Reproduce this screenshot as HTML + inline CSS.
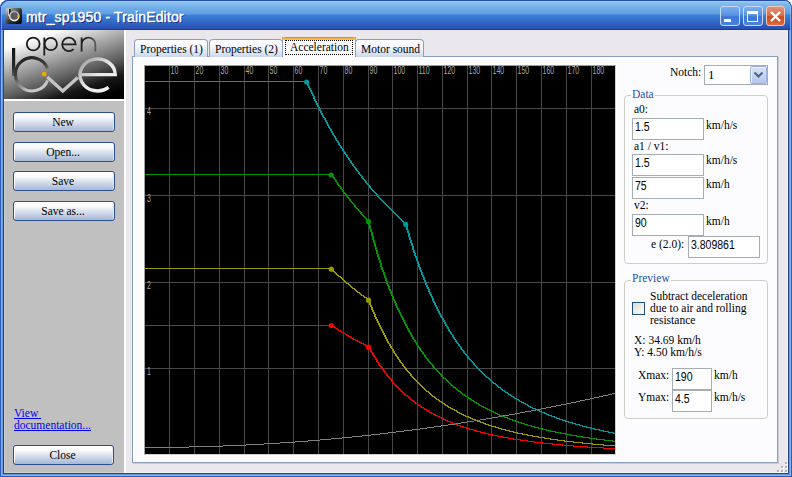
<!DOCTYPE html>
<html><head><meta charset="utf-8">
<style>
*{box-sizing:border-box}
html,body{margin:0;padding:0;width:792px;height:477px;overflow:hidden;background:#fff}
body{position:relative;font-family:"Liberation Serif",serif;font-size:11.5px;color:#000}
.a{position:absolute}
#frame{left:0;top:0;width:792px;height:477px;background:#fff}
#title{left:0;top:0;width:792px;height:30px;border-radius:8px 8px 0 0;box-shadow:inset 1px 1px 0 #2248b0,inset -1px 0 0 #2c5cc0;
 background:linear-gradient(to bottom,#2040a0 0,#2040a0 1px,#a8d0f4 1px,#a8d0f4 2px,#88c0ee 2px,#80baec 4px,#5c9ce2 14px,#3c80d6 15px,#3a7cd4 17px,#2a50b4 28px,#2a50b4 29px,#1e3898 29px,#1e3898 30px)}
#bottom{left:0;top:473px;width:792px;height:4px;background:linear-gradient(to bottom,#23449a 0,#23449a 1px,#5a8ad8 1px,#5a8ad8 2px,#84b2e2 2px,#84b2e2 3px,#2c5cc0 3px)}
#client{left:4px;top:30px;width:784px;height:443px;background:#eae8ec;border-right:1px solid #f4f2f0;border-bottom:1px solid #f4f2f0}
.ttl{left:26px;top:9px;letter-spacing:0.15px;-webkit-text-stroke:0.45px #fff;font:14px "Liberation Sans",sans-serif;color:#fff;text-shadow:1px 1px 0 #0a1a80;white-space:pre;line-height:16px}
.tb{top:6px;width:20px;height:20px;border:1px solid #c4d8f6;border-radius:3px;
 background:linear-gradient(to bottom,#7aaef0 0,#5a92e2 45%,#3e76d6 55%,#4a82dc 100%)}
.tbc{border-color:#f0c8b8;background:linear-gradient(to bottom,#e09078 0,#d87050 45%,#cc4a1c 55%,#e06a3c 100%)}
/* left panel */
#logo{left:4px;top:30px;width:120px;height:69px;overflow:hidden;
 background:#888}
#lpanel{left:4px;top:101px;width:120px;height:372px;background:#c0c0c0;border-left:1px solid #cecbc6;border-bottom:1px solid #d2d0ca}
#wline{left:124px;top:30px;width:2px;height:443px;background:#fff}
#wline2{left:4px;top:99px;width:120px;height:2px;background:#fff}
.btn{width:102px;height:20px;border:1px solid #2c4e8a;border-radius:3px;text-align:center;line-height:18px;padding-right:2px;
 background:linear-gradient(to bottom,#ffffff 0,#f8f9fb 25%,#d6deec 55%,#b4c3de 85%,#a8b8d6 100%);
 box-shadow:inset 1px 1px 0 #fff, inset -1px 0 0 #e4eaf4;font-size:11.5px;white-space:pre}
.lnk{color:#0000ff;text-decoration:underline;line-height:12px;white-space:pre}
/* tabs */
#page{left:132px;top:56px;width:646px;height:407px;border:1px solid #8aa0bc;background:#fcfcfe;box-shadow:1px 1px 0 #c4cad6}
.tab{top:39px;height:18px;border:1px solid #8aa0bc;border-bottom:none;border-radius:4px 4px 0 0;
 background:linear-gradient(to bottom,#fefefe 0,#f6f8fc 35%,#dde6f4 75%,#c8d6ee 100%);white-space:pre;line-height:16px;padding-left:5px;padding-top:1px}
.tabs{top:37px;height:20px;border:1px solid #8aa0bc;border-top:none;border-bottom:none;background:#fcfcfe;white-space:pre}
.txt{white-space:pre;line-height:12px}
.inp{background:#fff;border:1px solid #a5acb2;font:12.5px "Liberation Sans",sans-serif;line-height:16px;padding-left:2px;white-space:pre}
.inp span{display:inline-block;transform:scaleX(.84);transform-origin:0 0}
.grp{border:1px solid #cdcdc8;border-radius:4px}
.glab{color:#2850b0;background:#fcfcfe;padding:0 1px;white-space:pre;line-height:12px}
</style></head><body>
<div id="frame" class="a"></div>
<div class="a" style="left:0;top:8px;width:792px;height:469px;border:1px solid #2c5cc0;border-top:none"></div>
<div class="a" style="left:1px;top:8px;width:790px;height:468px;border:1px solid #86b4e4;border-top:none"></div>
<div class="a" style="left:2px;top:8px;width:788px;height:467px;border:1px solid #6496da;border-top:none"></div>
<div class="a" style="left:3px;top:30px;width:786px;height:444px;border:1px solid #23449a;border-top:none"></div>
<div id="title" class="a"></div>
<div id="client" class="a"></div>
<!-- icon -->
<div class="a" style="left:6px;top:8px;width:16px;height:16px;border-radius:2px;overflow:hidden;background:linear-gradient(135deg,#e0e0e0 0,#808080 25%,#303030 55%,#000 100%)">
 <svg width="16" height="16" style="position:absolute;left:0;top:0">
  <defs><linearGradient id="ib" x1="0" y1="0" x2="0" y2="1"><stop offset="0" stop-color="#a8a8a8"/><stop offset="1" stop-color="#f4f4f4"/></linearGradient></defs>
  <path d="M2.6 1V8" stroke="#d0d0d0" stroke-width="1" fill="none"/><path d="M3.8 1V8" stroke="#000" stroke-width="1.4" fill="none"/>
  <circle cx="8.3" cy="8" r="4.6" fill="#5a5a5a" stroke="url(#ib)" stroke-width="1.6"/>
  <circle cx="12.2" cy="8" r="1.1" fill="#ffb000"/>
 </svg>
</div>
<div class="a" style="left:1px;top:6px;width:1px;height:24px;background:rgba(160,210,250,.55)"></div>
<div class="a" style="left:790px;top:6px;width:1px;height:24px;background:rgba(160,210,250,.55)"></div>
<div class="a ttl">mtr_sp1950 - TrainEditor</div>
<div class="a tb" style="left:720px"><div class="a" style="left:3px;top:12px;width:7px;height:3px;background:#fff"></div></div>
<div class="a tb" style="left:743px"><div class="a" style="left:3px;top:4px;width:11px;height:11px;border:1px solid #fff;border-top-width:3px"></div></div>
<div class="a tb tbc" style="left:766px;width:19px"><svg width="19" height="20" style="position:absolute;left:-1px;top:-1px"><path d="M5 6L14 15M14 6L5 15" stroke="#fff" stroke-width="2.4" fill="none"/></svg></div>

<!-- left panel -->
<div id="logo" class="a">
 <svg width="120" height="69" style="position:absolute;left:0;top:0">
  <defs>
   <linearGradient id="lg" gradientUnits="userSpaceOnUse" x1="0" y1="0" x2="35.8" y2="106.4"><stop offset=".15" stop-color="#fff"/><stop offset=".34" stop-color="#b4b4b4"/><stop offset=".585" stop-color="#585858"/><stop offset=".72" stop-color="#161616"/><stop offset=".85" stop-color="#000"/></linearGradient>
   <linearGradient id="gb" x1="0" y1="0" x2="0.4" y2="1"><stop offset="0" stop-color="#1e1e1e"/><stop offset=".45" stop-color="#3a3a3a"/><stop offset="1" stop-color="#c8c8c8"/></linearGradient>
   <linearGradient id="ge" x1="0" y1="0" x2="1" y2="1"><stop offset="0" stop-color="#9a9a9a"/><stop offset=".5" stop-color="#e8e8e8"/><stop offset="1" stop-color="#f4f4f4"/></linearGradient>
   <linearGradient id="gn" gradientUnits="userSpaceOnUse" x1="20" y1="0" x2="95" y2="0"><stop offset="0" stop-color="#1a1a1a"/><stop offset=".8" stop-color="#222"/><stop offset="1" stop-color="#666"/></linearGradient>
  </defs>
  <rect width="120" height="69" fill="url(#lg)"/>
  <g fill="none" stroke="url(#gn)" stroke-width="1.8">
   <circle cx="29.2" cy="14" r="6.4"/>
   <path d="M40.3 7.5V25.5"/><circle cx="46.8" cy="14" r="6.2"/>
   <path d="M58.3 14.3H71.6A6.7 6.7 0 1 0 69.6 19.2"/>
   <path d="M77.6 21.5V7.5M77.6 14.2A6.9 6.6 0 0 1 91.4 14.2V21.5"/>
  </g>
  <linearGradient id="gs" gradientUnits="userSpaceOnUse" x1="0" y1="18" x2="0" y2="50"><stop offset="0" stop-color="#111"/><stop offset=".6" stop-color="#2a2a2a"/><stop offset="1" stop-color="#777"/></linearGradient><path d="M9.6 18V46" stroke="url(#gs)" stroke-width="3.2" fill="none"/>
  <path d="M43.6 38.5A16.6 16.6 0 1 0 43.6 50.2" stroke="url(#gb)" stroke-width="3.1" fill="none"/>
  <path d="M43.2 47L58.8 61L73.8 47.5" stroke="#c4c4c4" stroke-width="3.4" fill="none" stroke-linejoin="miter"/>
  <path d="M75.5 44.6H111.2A17.6 16 0 1 0 104.6 57.4" stroke="url(#ge)" stroke-width="3.4" fill="none"/>
  <circle cx="40.2" cy="44.2" r="2.4" fill="#f0a800"/>
 </svg>
</div>
<div id="wline2" class="a"></div>
<div id="lpanel" class="a"></div>
<div id="wline" class="a"></div>
<div class="a btn" style="left:13px;top:112px">New</div>
<div class="a btn" style="left:13px;top:142px">Open...</div>
<div class="a btn" style="left:13px;top:171px">Save</div>
<div class="a btn" style="left:13px;top:201px">Save as...</div>
<div class="a lnk" style="left:14px;top:407px">View </div>
<div class="a lnk" style="left:14px;top:419px">documentation...</div>
<div class="a btn" style="left:13px;top:445px;width:101px">Close</div>

<!-- tabs -->
<div id="page" class="a"></div>
<div class="a tab" style="left:134px;width:74px">Properties (1)</div>
<div class="a tab" style="left:209px;width:74px">Properties (2)</div>
<div class="a tab" style="left:355px;width:69px">Motor sound</div>
<div class="a tabs" style="left:282px;width:74px"><div class="a" style="left:-1px;top:0;width:74px;height:3px;border-radius:3px 3px 0 0;background:linear-gradient(to bottom,#e68b2c 0,#e68b2c 1px,#f8a83a 1px,#ffc73c 3px)"></div>
 <div class="a" style="left:2px;top:3px;width:68px;height:15px;outline:1px dotted #000;outline-offset:-1px"></div>
 <div class="a txt" style="left:7px;top:4px">Acceleration</div></div>

<!-- chart -->
<div class="a" style="left:143px;top:64px;width:474px;height:392px;border:1px solid;border-color:#fff #fff #fff #fff"></div>
<div class="a" style="left:144px;top:65px;width:472px;height:390px;border:1px solid;border-color:#a0a0a0 #d4d0c8 #d4d0c8 #a0a0a0"></div>
<svg width="470" height="388" viewBox="145 66 470 388" style="position:absolute;left:145px;top:66px;display:block" shape-rendering="crispEdges">
<rect x="145" y="66" width="470" height="388" fill="#000"/>
<path d="M169 66h1v388h-1zM194 66h1v388h-1zM219 66h1v388h-1zM244 66h1v388h-1zM268 66h1v388h-1zM293 66h1v388h-1zM318 66h1v388h-1zM343 66h1v388h-1zM368 66h1v388h-1zM392 66h1v388h-1zM417 66h1v388h-1zM442 66h1v388h-1zM467 66h1v388h-1zM491 66h1v388h-1zM516 66h1v388h-1zM541 66h1v388h-1zM566 66h1v388h-1zM591 66h1v388h-1zM145 368h470v1h-470zM145 282h470v1h-470zM145 195h470v1h-470zM145 108h470v1h-470z" fill="#484848"/>
<g transform="scale(0.7 1)" font-family="Liberation Sans" font-size="10" fill="#a8a8a8" shape-rendering="auto"><text x="243.571" y="74.5">10</text><text x="279.286" y="74.5">20</text><text x="315" y="74.5">30</text><text x="350.714" y="74.5">40</text><text x="385" y="74.5">50</text><text x="420.714" y="74.5">60</text><text x="456.429" y="74.5">70</text><text x="492.143" y="74.5">80</text><text x="527.857" y="74.5">90</text><text x="562.143" y="74.5">100</text><text x="597.857" y="74.5">110</text><text x="633.571" y="74.5">120</text><text x="669.286" y="74.5">130</text><text x="703.571" y="74.5">140</text><text x="739.286" y="74.5">150</text><text x="775" y="74.5">160</text><text x="810.714" y="74.5">170</text><text x="846.429" y="74.5">180</text><text x="210" y="375.5">1</text><text x="210" y="289.5">2</text><text x="210" y="202.5">3</text><text x="210" y="115.5">4</text></g>
<path d="M612 393h3v1h-3zM608 394h4v1h-4zM603 395h5v1h-5zM599 396h4v1h-4zM594 397h5v1h-5zM590 398h4v1h-4zM585 399h5v1h-5zM580 400h5v1h-5zM576 401h4v1h-4zM571 402h5v1h-5zM566 403h5v1h-5zM561 404h5v1h-5zM556 405h5v1h-5zM551 406h5v1h-5zM546 407h5v1h-5zM541 408h5v1h-5zM536 409h5v1h-5zM531 410h5v1h-5zM525 411h6v1h-6zM520 412h5v1h-5zM515 413h5v1h-5zM509 414h6v1h-6zM503 415h6v1h-6zM498 416h5v1h-5zM492 417h6v1h-6zM486 418h6v1h-6zM480 419h6v1h-6zM474 420h6v1h-6zM467 421h7v1h-7zM461 422h6v1h-6zM455 423h6v1h-6zM448 424h7v1h-7zM441 425h7v1h-7zM434 426h7v1h-7zM427 427h7v1h-7zM420 428h7v1h-7zM412 429h8v1h-8zM404 430h8v1h-8zM396 431h8v1h-8zM388 432h8v1h-8zM380 433h8v1h-8zM371 434h9v1h-9zM362 435h9v1h-9zM352 436h10v1h-10zM342 437h10v1h-10zM331 438h11v1h-11zM320 439h11v1h-11zM308 440h12v1h-12zM295 441h13v1h-13zM280 442h15v1h-15zM264 443h16v1h-16zM246 444h18v1h-18zM223 445h23v1h-23zM189 446h34v1h-34zM145 447h44v1h-44z" fill="#808080"/>
<path d="M145 325h188v1h-188zM332 326h3v1h-3zM334 327h2v1h-2zM335 328h3v1h-3zM337 329h2v1h-2zM338 330h3v1h-3zM340 331h2v1h-2zM341 332h3v1h-3zM343 333h3v1h-3zM345 334h2v1h-2zM346 335h3v1h-3zM348 336h3v1h-3zM350 337h2v1h-2zM351 338h3v1h-3zM353 339h3v1h-3zM355 340h3v1h-3zM357 341h3v1h-3zM359 342h3v1h-3zM361 343h3v1h-3zM363 344h3v1h-3zM365 345h3v1h-3zM367 346h2v1h-2zM368 347h2v1h-2zM369 348h2v1h-2zM369 349h2v1h-2zM370 350h2v1h-2zM370 351h2v1h-2zM371 352h2v1h-2zM372 353h2v1h-2zM372 354h2v1h-2zM373 355h2v1h-2zM373 356h2v1h-2zM374 357h2v1h-2zM375 358h2v1h-2zM375 359h2v1h-2zM376 360h2v1h-2zM376 361h2v1h-2zM377 362h2v1h-2zM378 363h2v1h-2zM378 364h2v1h-2zM379 365h2v1h-2zM380 366h2v1h-2zM381 367h2v1h-2zM381 368h2v1h-2zM382 369h2v1h-2zM383 370h2v1h-2zM383 371h2v1h-2zM384 372h2v1h-2zM385 373h2v1h-2zM386 374h2v1h-2zM386 375h2v1h-2zM387 376h2v1h-2zM388 377h2v1h-2zM389 378h2v1h-2zM390 379h2v1h-2zM391 380h2v1h-2zM391 381h2v1h-2zM392 382h2v1h-2zM393 383h2v1h-2zM394 384h2v1h-2zM395 385h2v1h-2zM396 386h2v1h-2zM397 387h2v1h-2zM398 388h2v1h-2zM399 389h2v1h-2zM400 390h2v1h-2zM401 391h2v1h-2zM402 392h2v1h-2zM403 393h2v1h-2zM404 394h2v1h-2zM405 395h3v1h-3zM407 396h2v1h-2zM408 397h2v1h-2zM409 398h2v1h-2zM410 399h2v1h-2zM411 400h3v1h-3zM413 401h2v1h-2zM414 402h2v1h-2zM415 403h3v1h-3zM417 404h2v1h-2zM418 405h3v1h-3zM420 406h2v1h-2zM421 407h3v1h-3zM423 408h2v1h-2zM424 409h3v1h-3zM426 410h3v1h-3zM428 411h2v1h-2zM429 412h3v1h-3zM431 413h3v1h-3zM433 414h3v1h-3zM435 415h3v1h-3zM437 416h3v1h-3zM439 417h3v1h-3zM441 418h3v1h-3zM443 419h3v1h-3zM445 420h3v1h-3zM447 421h4v1h-4zM450 422h3v1h-3zM452 423h4v1h-4zM455 424h3v1h-3zM457 425h4v1h-4zM460 426h4v1h-4zM463 427h4v1h-4zM466 428h4v1h-4zM469 429h5v1h-5zM473 430h4v1h-4zM476 431h5v1h-5zM480 432h5v1h-5zM484 433h5v1h-5zM488 434h5v1h-5zM492 435h6v1h-6zM497 436h6v1h-6zM502 437h7v1h-7zM508 438h6v1h-6zM513 439h8v1h-8zM520 440h8v1h-8zM527 441h8v1h-8zM534 442h9v1h-9zM542 443h11v1h-11zM552 444h11v1h-11zM562 445h12v1h-12zM573 446h15v1h-15zM587 447h17v1h-17zM603 448h12v1h-12z" fill="#ff0000"/>
<circle cx="331.3" cy="325.5" r="2.6" fill="#ff0000" shape-rendering="auto"/>
<circle cx="368.5" cy="347.2" r="2.6" fill="#ff0000" shape-rendering="auto"/>
<path d="M145 268h187v1h-187zM331 269h2v1h-2zM332 270h2v1h-2zM333 271h2v1h-2zM334 272h2v1h-2zM335 273h2v1h-2zM336 274h2v1h-2zM337 275h2v1h-2zM338 276h3v1h-3zM340 277h2v1h-2zM341 278h2v1h-2zM342 279h2v1h-2zM343 280h2v1h-2zM344 281h2v1h-2zM345 282h2v1h-2zM346 283h3v1h-3zM348 284h2v1h-2zM349 285h2v1h-2zM350 286h2v1h-2zM351 287h2v1h-2zM352 288h3v1h-3zM354 289h2v1h-2zM355 290h2v1h-2zM356 291h2v1h-2zM357 292h3v1h-3zM359 293h2v1h-2zM360 294h2v1h-2zM361 295h3v1h-3zM363 296h2v1h-2zM364 297h3v1h-3zM366 298h2v1h-2zM367 299h2v1h-2zM368 300h2v1h-2zM368 301h2v1h-2zM369 302h2v1h-2zM369 303h2v1h-2zM369 304h2v1h-2zM370 305h2v1h-2zM370 306h2v1h-2zM371 307h2v1h-2zM371 308h2v1h-2zM371 309h2v1h-2zM372 310h2v1h-2zM372 311h2v1h-2zM373 312h2v1h-2zM373 313h2v1h-2zM374 314h2v1h-2zM374 315h2v1h-2zM374 316h2v1h-2zM375 317h2v1h-2zM375 318h2v1h-2zM376 319h2v1h-2zM376 320h2v1h-2zM377 321h2v1h-2zM377 322h2v1h-2zM378 323h2v1h-2zM378 324h2v1h-2zM379 325h2v1h-2zM379 326h2v1h-2zM380 327h2v1h-2zM380 328h2v1h-2zM381 329h2v1h-2zM381 330h2v1h-2zM382 331h2v1h-2zM382 332h2v1h-2zM383 333h2v1h-2zM383 334h2v1h-2zM384 335h2v1h-2zM384 336h2v1h-2zM385 337h2v1h-2zM385 338h2v1h-2zM386 339h2v1h-2zM386 340h2v1h-2zM387 341h2v1h-2zM387 342h2v1h-2zM388 343h2v1h-2zM389 344h2v1h-2zM389 345h2v1h-2zM390 346h2v1h-2zM390 347h2v1h-2zM391 348h2v1h-2zM392 349h2v1h-2zM392 350h2v1h-2zM393 351h2v1h-2zM393 352h2v1h-2zM394 353h2v1h-2zM395 354h2v1h-2zM395 355h2v1h-2zM396 356h2v1h-2zM397 357h2v1h-2zM397 358h2v1h-2zM398 359h2v1h-2zM399 360h2v1h-2zM399 361h2v1h-2zM400 362h2v1h-2zM401 363h2v1h-2zM402 364h2v1h-2zM402 365h2v1h-2zM403 366h2v1h-2zM404 367h2v1h-2zM405 368h2v1h-2zM405 369h2v1h-2zM406 370h2v1h-2zM407 371h2v1h-2zM408 372h2v1h-2zM409 373h2v1h-2zM410 374h2v1h-2zM410 375h2v1h-2zM411 376h2v1h-2zM412 377h2v1h-2zM413 378h2v1h-2zM414 379h2v1h-2zM415 380h2v1h-2zM416 381h2v1h-2zM417 382h2v1h-2zM418 383h2v1h-2zM419 384h2v1h-2zM420 385h2v1h-2zM421 386h2v1h-2zM422 387h2v1h-2zM423 388h2v1h-2zM424 389h2v1h-2zM425 390h2v1h-2zM426 391h3v1h-3zM428 392h2v1h-2zM429 393h2v1h-2zM430 394h2v1h-2zM431 395h2v1h-2zM432 396h3v1h-3zM434 397h2v1h-2zM435 398h2v1h-2zM436 399h3v1h-3zM438 400h2v1h-2zM439 401h3v1h-3zM441 402h2v1h-2zM442 403h3v1h-3zM444 404h2v1h-2zM445 405h3v1h-3zM447 406h2v1h-2zM448 407h3v1h-3zM450 408h3v1h-3zM452 409h3v1h-3zM454 410h3v1h-3zM456 411h2v1h-2zM457 412h3v1h-3zM459 413h3v1h-3zM461 414h3v1h-3zM463 415h3v1h-3zM465 416h4v1h-4zM468 417h3v1h-3zM470 418h3v1h-3zM472 419h4v1h-4zM475 420h3v1h-3zM477 421h4v1h-4zM480 422h4v1h-4zM483 423h3v1h-3zM485 424h4v1h-4zM488 425h4v1h-4zM491 426h5v1h-5zM495 427h4v1h-4zM498 428h4v1h-4zM501 429h5v1h-5zM505 430h5v1h-5zM509 431h5v1h-5zM513 432h5v1h-5zM517 433h6v1h-6zM522 434h6v1h-6zM527 435h6v1h-6zM532 436h7v1h-7zM538 437h7v1h-7zM544 438h7v1h-7zM550 439h8v1h-8zM557 440h8v1h-8zM564 441h10v1h-10zM573 442h10v1h-10zM582 443h11v1h-11zM592 444h12v1h-12zM603 445h12v1h-12z" fill="#9a9a00"/>
<circle cx="331.3" cy="269.2" r="2.6" fill="#9a9a00" shape-rendering="auto"/>
<circle cx="368.5" cy="300.2" r="2.6" fill="#9a9a00" shape-rendering="auto"/>
<path d="M145 174h187v1h-187zM331 175h2v1h-2zM332 176h2v1h-2zM333 177h2v1h-2zM333 178h2v1h-2zM334 179h2v1h-2zM335 180h2v1h-2zM335 181h2v1h-2zM336 182h2v1h-2zM337 183h2v1h-2zM337 184h2v1h-2zM338 185h2v1h-2zM339 186h2v1h-2zM340 187h2v1h-2zM340 188h2v1h-2zM341 189h2v1h-2zM342 190h2v1h-2zM342 191h2v1h-2zM343 192h2v1h-2zM344 193h2v1h-2zM345 194h2v1h-2zM346 195h2v1h-2zM346 196h2v1h-2zM347 197h2v1h-2zM348 198h2v1h-2zM349 199h2v1h-2zM349 200h2v1h-2zM350 201h2v1h-2zM351 202h2v1h-2zM352 203h2v1h-2zM353 204h2v1h-2zM354 205h2v1h-2zM354 206h2v1h-2zM355 207h2v1h-2zM356 208h2v1h-2zM357 209h2v1h-2zM358 210h2v1h-2zM359 211h2v1h-2zM360 212h2v1h-2zM360 213h2v1h-2zM361 214h2v1h-2zM362 215h2v1h-2zM363 216h2v1h-2zM364 217h2v1h-2zM365 218h2v1h-2zM366 219h2v1h-2zM367 220h2v1h-2zM367 221h2v1h-2zM368 222h2v1h-2zM368 223h2v1h-2zM368 224h2v1h-2zM369 225h2v1h-2zM369 226h2v1h-2zM369 227h2v1h-2zM369 228h2v1h-2zM370 229h2v1h-2zM370 230h2v1h-2zM370 231h2v1h-2zM371 232h2v1h-2zM371 233h2v1h-2zM371 234h2v1h-2zM371 235h2v1h-2zM372 236h2v1h-2zM372 237h2v1h-2zM372 238h2v1h-2zM372 239h2v1h-2zM373 240h2v1h-2zM373 241h2v1h-2zM373 242h2v1h-2zM374 243h2v1h-2zM374 244h2v1h-2zM374 245h2v1h-2zM374 246h2v1h-2zM375 247h2v1h-2zM375 248h2v1h-2zM375 249h2v1h-2zM376 250h2v1h-2zM376 251h2v1h-2zM376 252h2v1h-2zM376 253h2v1h-2zM377 254h2v1h-2zM377 255h2v1h-2zM377 256h2v1h-2zM378 257h2v1h-2zM378 258h2v1h-2zM378 259h2v1h-2zM379 260h2v1h-2zM379 261h2v1h-2zM379 262h2v1h-2zM380 263h2v1h-2zM380 264h2v1h-2zM380 265h2v1h-2zM380 266h2v1h-2zM381 267h2v1h-2zM381 268h2v1h-2zM381 269h2v1h-2zM382 270h2v1h-2zM382 271h2v1h-2zM383 272h2v1h-2zM383 273h2v1h-2zM383 274h2v1h-2zM384 275h2v1h-2zM384 276h2v1h-2zM384 277h2v1h-2zM385 278h2v1h-2zM385 279h2v1h-2zM385 280h2v1h-2zM386 281h2v1h-2zM386 282h2v1h-2zM386 283h2v1h-2zM387 284h2v1h-2zM387 285h2v1h-2zM388 286h2v1h-2zM388 287h2v1h-2zM388 288h2v1h-2zM389 289h2v1h-2zM389 290h2v1h-2zM390 291h2v1h-2zM390 292h2v1h-2zM390 293h2v1h-2zM391 294h2v1h-2zM391 295h2v1h-2zM392 296h2v1h-2zM392 297h2v1h-2zM392 298h2v1h-2zM393 299h2v1h-2zM393 300h2v1h-2zM394 301h2v1h-2zM394 302h2v1h-2zM395 303h2v1h-2zM395 304h2v1h-2zM395 305h2v1h-2zM396 306h2v1h-2zM396 307h2v1h-2zM397 308h2v1h-2zM397 309h2v1h-2zM398 310h2v1h-2zM398 311h2v1h-2zM399 312h2v1h-2zM399 313h2v1h-2zM400 314h2v1h-2zM400 315h2v1h-2zM401 316h2v1h-2zM401 317h2v1h-2zM402 318h2v1h-2zM402 319h2v1h-2zM403 320h2v1h-2zM403 321h2v1h-2zM404 322h2v1h-2zM404 323h2v1h-2zM405 324h2v1h-2zM405 325h2v1h-2zM406 326h2v1h-2zM406 327h2v1h-2zM407 328h2v1h-2zM407 329h2v1h-2zM408 330h2v1h-2zM408 331h2v1h-2zM409 332h2v1h-2zM410 333h2v1h-2zM410 334h2v1h-2zM411 335h2v1h-2zM411 336h2v1h-2zM412 337h2v1h-2zM412 338h2v1h-2zM413 339h2v1h-2zM414 340h2v1h-2zM414 341h2v1h-2zM415 342h2v1h-2zM416 343h2v1h-2zM416 344h2v1h-2zM417 345h2v1h-2zM417 346h2v1h-2zM418 347h2v1h-2zM419 348h2v1h-2zM419 349h2v1h-2zM420 350h2v1h-2zM421 351h2v1h-2zM422 352h2v1h-2zM422 353h2v1h-2zM423 354h2v1h-2zM424 355h2v1h-2zM424 356h2v1h-2zM425 357h2v1h-2zM426 358h2v1h-2zM427 359h2v1h-2zM427 360h2v1h-2zM428 361h2v1h-2zM429 362h2v1h-2zM430 363h2v1h-2zM431 364h2v1h-2zM432 365h2v1h-2zM432 366h2v1h-2zM433 367h2v1h-2zM434 368h2v1h-2zM435 369h2v1h-2zM436 370h2v1h-2zM437 371h2v1h-2zM438 372h2v1h-2zM439 373h2v1h-2zM440 374h2v1h-2zM441 375h2v1h-2zM441 376h2v1h-2zM442 377h2v1h-2zM443 378h3v1h-3zM445 379h2v1h-2zM446 380h2v1h-2zM447 381h2v1h-2zM448 382h2v1h-2zM449 383h2v1h-2zM450 384h2v1h-2zM451 385h2v1h-2zM452 386h2v1h-2zM453 387h3v1h-3zM455 388h2v1h-2zM456 389h2v1h-2zM457 390h2v1h-2zM458 391h3v1h-3zM460 392h2v1h-2zM461 393h2v1h-2zM462 394h3v1h-3zM464 395h2v1h-2zM465 396h3v1h-3zM467 397h2v1h-2zM468 398h3v1h-3zM470 399h2v1h-2zM471 400h3v1h-3zM473 401h2v1h-2zM474 402h3v1h-3zM476 403h3v1h-3zM478 404h2v1h-2zM479 405h3v1h-3zM481 406h3v1h-3zM483 407h3v1h-3zM485 408h3v1h-3zM487 409h3v1h-3zM489 410h3v1h-3zM491 411h3v1h-3zM493 412h3v1h-3zM495 413h3v1h-3zM497 414h3v1h-3zM499 415h4v1h-4zM502 416h3v1h-3zM504 417h4v1h-4zM507 418h3v1h-3zM509 419h4v1h-4zM512 420h4v1h-4zM515 421h4v1h-4zM518 422h4v1h-4zM521 423h4v1h-4zM524 424h4v1h-4zM527 425h5v1h-5zM531 426h4v1h-4zM534 427h5v1h-5zM538 428h5v1h-5zM542 429h5v1h-5zM546 430h5v1h-5zM550 431h6v1h-6zM555 432h6v1h-6zM560 433h6v1h-6zM565 434h6v1h-6zM570 435h7v1h-7zM576 436h7v1h-7zM582 437h8v1h-8zM589 438h8v1h-8zM596 439h9v1h-9zM604 440h9v1h-9zM612 441h3v1h-3z" fill="#009800"/>
<circle cx="331.3" cy="175.0" r="2.6" fill="#009800" shape-rendering="auto"/>
<circle cx="368.5" cy="221.7" r="2.6" fill="#009800" shape-rendering="auto"/>
<path d="M145 81h162v1h-162zM306 82h2v1h-2zM307 83h2v1h-2zM307 84h2v1h-2zM307 85h2v1h-2zM308 86h2v1h-2zM308 87h2v1h-2zM309 88h2v1h-2zM309 89h2v1h-2zM310 90h2v1h-2zM310 91h2v1h-2zM311 92h2v1h-2zM311 93h2v1h-2zM312 94h2v1h-2zM312 95h2v1h-2zM313 96h2v1h-2zM313 97h2v1h-2zM313 98h2v1h-2zM314 99h2v1h-2zM314 100h2v1h-2zM315 101h2v1h-2zM315 102h2v1h-2zM316 103h2v1h-2zM316 104h2v1h-2zM317 105h2v1h-2zM317 106h2v1h-2zM318 107h2v1h-2zM318 108h2v1h-2zM319 109h2v1h-2zM319 110h2v1h-2zM320 111h2v1h-2zM320 112h2v1h-2zM321 113h2v1h-2zM321 114h2v1h-2zM322 115h2v1h-2zM322 116h2v1h-2zM323 117h2v1h-2zM324 118h2v1h-2zM324 119h2v1h-2zM325 120h2v1h-2zM325 121h2v1h-2zM326 122h2v1h-2zM326 123h2v1h-2zM327 124h2v1h-2zM327 125h2v1h-2zM328 126h2v1h-2zM328 127h2v1h-2zM329 128h2v1h-2zM330 129h2v1h-2zM330 130h2v1h-2zM331 131h2v1h-2zM331 132h2v1h-2zM332 133h2v1h-2zM332 134h2v1h-2zM333 135h2v1h-2zM334 136h2v1h-2zM334 137h2v1h-2zM335 138h2v1h-2zM335 139h2v1h-2zM336 140h2v1h-2zM337 141h2v1h-2zM337 142h2v1h-2zM338 143h2v1h-2zM338 144h2v1h-2zM339 145h2v1h-2zM340 146h2v1h-2zM340 147h2v1h-2zM341 148h2v1h-2zM342 149h2v1h-2zM342 150h2v1h-2zM343 151h2v1h-2zM344 152h2v1h-2zM344 153h2v1h-2zM345 154h2v1h-2zM346 155h2v1h-2zM346 156h2v1h-2zM347 157h2v1h-2zM348 158h2v1h-2zM348 159h2v1h-2zM349 160h2v1h-2zM350 161h2v1h-2zM350 162h2v1h-2zM351 163h2v1h-2zM352 164h2v1h-2zM352 165h2v1h-2zM353 166h2v1h-2zM354 167h2v1h-2zM355 168h2v1h-2zM355 169h2v1h-2zM356 170h2v1h-2zM357 171h2v1h-2zM358 172h2v1h-2zM358 173h2v1h-2zM359 174h2v1h-2zM360 175h2v1h-2zM361 176h2v1h-2zM361 177h2v1h-2zM362 178h2v1h-2zM363 179h2v1h-2zM364 180h2v1h-2zM365 181h2v1h-2zM365 182h2v1h-2zM366 183h2v1h-2zM367 184h2v1h-2zM368 185h2v1h-2zM369 186h2v1h-2zM369 187h2v1h-2zM370 188h2v1h-2zM371 189h2v1h-2zM372 190h2v1h-2zM373 191h2v1h-2zM374 192h2v1h-2zM375 193h2v1h-2zM376 194h2v1h-2zM376 195h2v1h-2zM377 196h2v1h-2zM378 197h2v1h-2zM379 198h2v1h-2zM380 199h2v1h-2zM381 200h2v1h-2zM382 201h2v1h-2zM383 202h2v1h-2zM384 203h2v1h-2zM385 204h2v1h-2zM386 205h2v1h-2zM387 206h2v1h-2zM388 207h2v1h-2zM389 208h2v1h-2zM390 209h2v1h-2zM391 210h2v1h-2zM392 211h2v1h-2zM393 212h2v1h-2zM394 213h2v1h-2zM395 214h2v1h-2zM396 215h2v1h-2zM397 216h2v1h-2zM398 217h2v1h-2zM399 218h2v1h-2zM400 219h2v1h-2zM401 220h2v1h-2zM402 221h2v1h-2zM403 222h2v1h-2zM404 223h2v1h-2zM405 224h2v1h-2zM405 225h2v1h-2zM406 226h2v1h-2zM406 227h2v1h-2zM406 228h2v1h-2zM406 229h2v1h-2zM407 230h2v1h-2zM407 231h2v1h-2zM407 232h2v1h-2zM408 233h2v1h-2zM408 234h2v1h-2zM408 235h2v1h-2zM408 236h2v1h-2zM409 237h2v1h-2zM409 238h2v1h-2zM409 239h2v1h-2zM410 240h2v1h-2zM410 241h2v1h-2zM410 242h2v1h-2zM411 243h2v1h-2zM411 244h2v1h-2zM411 245h2v1h-2zM412 246h2v1h-2zM412 247h2v1h-2zM412 248h2v1h-2zM412 249h2v1h-2zM413 250h2v1h-2zM413 251h2v1h-2zM413 252h2v1h-2zM414 253h2v1h-2zM414 254h2v1h-2zM414 255h2v1h-2zM415 256h2v1h-2zM415 257h2v1h-2zM416 258h2v1h-2zM416 259h2v1h-2zM416 260h2v1h-2zM417 261h2v1h-2zM417 262h2v1h-2zM417 263h2v1h-2zM418 264h2v1h-2zM418 265h2v1h-2zM418 266h2v1h-2zM419 267h2v1h-2zM419 268h2v1h-2zM419 269h2v1h-2zM420 270h2v1h-2zM420 271h2v1h-2zM421 272h2v1h-2zM421 273h2v1h-2zM421 274h2v1h-2zM422 275h2v1h-2zM422 276h2v1h-2zM423 277h2v1h-2zM423 278h2v1h-2zM423 279h2v1h-2zM424 280h2v1h-2zM424 281h2v1h-2zM425 282h2v1h-2zM425 283h2v1h-2zM425 284h2v1h-2zM426 285h2v1h-2zM426 286h2v1h-2zM427 287h2v1h-2zM427 288h2v1h-2zM428 289h2v1h-2zM428 290h2v1h-2zM428 291h2v1h-2zM429 292h2v1h-2zM429 293h2v1h-2zM430 294h2v1h-2zM430 295h2v1h-2zM431 296h2v1h-2zM431 297h2v1h-2zM432 298h2v1h-2zM432 299h2v1h-2zM432 300h2v1h-2zM433 301h2v1h-2zM433 302h2v1h-2zM434 303h2v1h-2zM434 304h2v1h-2zM435 305h2v1h-2zM435 306h2v1h-2zM436 307h2v1h-2zM436 308h2v1h-2zM437 309h2v1h-2zM437 310h2v1h-2zM438 311h2v1h-2zM438 312h2v1h-2zM439 313h2v1h-2zM439 314h2v1h-2zM440 315h2v1h-2zM440 316h2v1h-2zM441 317h2v1h-2zM442 318h2v1h-2zM442 319h2v1h-2zM443 320h2v1h-2zM443 321h2v1h-2zM444 322h2v1h-2zM444 323h2v1h-2zM445 324h2v1h-2zM445 325h2v1h-2zM446 326h2v1h-2zM447 327h2v1h-2zM447 328h2v1h-2zM448 329h2v1h-2zM448 330h2v1h-2zM449 331h2v1h-2zM450 332h2v1h-2zM450 333h2v1h-2zM451 334h2v1h-2zM452 335h2v1h-2zM452 336h2v1h-2zM453 337h2v1h-2zM453 338h2v1h-2zM454 339h2v1h-2zM455 340h2v1h-2zM455 341h2v1h-2zM456 342h2v1h-2zM457 343h2v1h-2zM458 344h2v1h-2zM458 345h2v1h-2zM459 346h2v1h-2zM460 347h2v1h-2zM460 348h2v1h-2zM461 349h2v1h-2zM462 350h2v1h-2zM463 351h2v1h-2zM463 352h2v1h-2zM464 353h2v1h-2zM465 354h2v1h-2zM466 355h2v1h-2zM467 356h2v1h-2zM467 357h2v1h-2zM468 358h2v1h-2zM469 359h2v1h-2zM470 360h2v1h-2zM471 361h2v1h-2zM472 362h2v1h-2zM473 363h2v1h-2zM473 364h2v1h-2zM474 365h2v1h-2zM475 366h2v1h-2zM476 367h2v1h-2zM477 368h2v1h-2zM478 369h2v1h-2zM479 370h2v1h-2zM480 371h2v1h-2zM481 372h2v1h-2zM482 373h2v1h-2zM483 374h2v1h-2zM484 375h2v1h-2zM485 376h2v1h-2zM486 377h3v1h-3zM488 378h2v1h-2zM489 379h2v1h-2zM490 380h2v1h-2zM491 381h2v1h-2zM492 382h2v1h-2zM493 383h3v1h-3zM495 384h2v1h-2zM496 385h2v1h-2zM497 386h2v1h-2zM498 387h3v1h-3zM500 388h2v1h-2zM501 389h2v1h-2zM502 390h3v1h-3zM504 391h2v1h-2zM505 392h3v1h-3zM507 393h2v1h-2zM508 394h3v1h-3zM510 395h2v1h-2zM511 396h3v1h-3zM513 397h2v1h-2zM514 398h3v1h-3zM516 399h3v1h-3zM518 400h2v1h-2zM519 401h3v1h-3zM521 402h3v1h-3zM523 403h3v1h-3zM525 404h3v1h-3zM527 405h2v1h-2zM528 406h3v1h-3zM530 407h3v1h-3zM532 408h4v1h-4zM535 409h3v1h-3zM537 410h3v1h-3zM539 411h3v1h-3zM541 412h4v1h-4zM544 413h3v1h-3zM546 414h3v1h-3zM548 415h4v1h-4zM551 416h4v1h-4zM554 417h3v1h-3zM556 418h4v1h-4zM559 419h4v1h-4zM562 420h4v1h-4zM565 421h4v1h-4zM568 422h5v1h-5zM572 423h4v1h-4zM575 424h5v1h-5zM579 425h4v1h-4zM582 426h5v1h-5zM586 427h5v1h-5zM590 428h5v1h-5zM594 429h6v1h-6zM599 430h5v1h-5zM603 431h6v1h-6zM608 432h6v1h-6zM613 433h2v1h-2z" fill="#009a9e"/>
<circle cx="306.6" cy="82.0" r="2.6" fill="#009a9e" shape-rendering="auto"/>
<circle cx="405.7" cy="224.3" r="2.6" fill="#009a9e" shape-rendering="auto"/>
</svg>

<!-- right panel -->
<div class="a txt" style="left:670px;top:66px">Notch:</div>
<div class="a" style="left:704px;top:65px;width:64px;height:20px;background:#fff;border:1px solid #a4acb4"></div>
<div class="a" style="left:708px;top:67px;font:13px 'Liberation Serif',serif;line-height:16px">1</div>
<div class="a" style="left:750px;top:66px;width:17px;height:18px;border:1px solid #9cb2de;border-radius:2px;box-shadow:inset 1px 1px 0 #eef3fc;background:linear-gradient(to bottom,#dae4fa,#b4c6ea)">
 <svg width="17" height="18" style="position:absolute;left:-1px;top:-1px"><path d="M4.5 6.5L8.5 10.5L12.5 6.5" stroke="#4d6185" stroke-width="2" fill="none"/></svg></div>

<div class="a grp" style="left:624px;top:95px;width:144px;height:169px"></div>
<div class="a glab" style="left:631px;top:88px">Data</div>
<div class="a txt" style="left:634px;top:103px">a0:</div>
<div class="a inp" style="left:632px;top:118px;width:72px;height:22px"><span>1.5</span></div>
<div class="a txt" style="left:706px;top:119px">km/h/s</div>
<div class="a txt" style="left:634px;top:140px">a1 / v1:</div>
<div class="a inp" style="left:632px;top:154px;width:72px;height:22px"><span>1.5</span></div>
<div class="a txt" style="left:706px;top:154px">km/h/s</div>
<div class="a inp" style="left:632px;top:177px;width:72px;height:22px"><span>75</span></div>
<div class="a txt" style="left:706px;top:178px">km/h</div>
<div class="a txt" style="left:634px;top:199px">v2:</div>
<div class="a inp" style="left:632px;top:214px;width:72px;height:22px"><span>90</span></div>
<div class="a txt" style="left:706px;top:215px">km/h</div>
<div class="a txt" style="left:651px;top:238px">e (2.0):</div>
<div class="a inp" style="left:688px;top:236px;width:72px;height:22px"><span>3.809861</span></div>

<div class="a grp" style="left:624px;top:280px;width:144px;height:139px"></div>
<div class="a glab" style="left:631px;top:272px">Preview</div>
<div class="a" style="left:632px;top:302px;width:13px;height:13px;border:1px solid #1c5180;background:linear-gradient(135deg,#dcdcd7,#fff)"></div>
<div class="a txt" style="left:650px;top:290px">Subtract deceleration<br>due to air and rolling<br>resistance</div>
<div class="a txt" style="left:634px;top:334px">X: 34.69 km/h<br>Y: 4.50 km/h/s</div>
<div class="a txt" style="left:638px;top:369px">Xmax:</div>
<div class="a inp" style="left:672px;top:368px;width:40px;height:22px"><span>190</span></div>
<div class="a txt" style="left:714px;top:369px">km/h</div>
<div class="a txt" style="left:638px;top:391px">Ymax:</div>
<div class="a inp" style="left:672px;top:390px;width:40px;height:22px"><span>4.5</span></div>
<div class="a txt" style="left:714px;top:391px">km/h/s</div>
<div class="a" style="left:785px;top:462px;width:2px;height:2px;background:#b4b2b8;box-shadow:1px 1px 0 #fff"></div><div class="a" style="left:781px;top:466px;width:2px;height:2px;background:#b4b2b8;box-shadow:1px 1px 0 #fff"></div><div class="a" style="left:785px;top:466px;width:2px;height:2px;background:#b4b2b8;box-shadow:1px 1px 0 #fff"></div><div class="a" style="left:777px;top:470px;width:2px;height:2px;background:#b4b2b8;box-shadow:1px 1px 0 #fff"></div><div class="a" style="left:781px;top:470px;width:2px;height:2px;background:#b4b2b8;box-shadow:1px 1px 0 #fff"></div><div class="a" style="left:785px;top:470px;width:2px;height:2px;background:#b4b2b8;box-shadow:1px 1px 0 #fff"></div>
</body></html>
